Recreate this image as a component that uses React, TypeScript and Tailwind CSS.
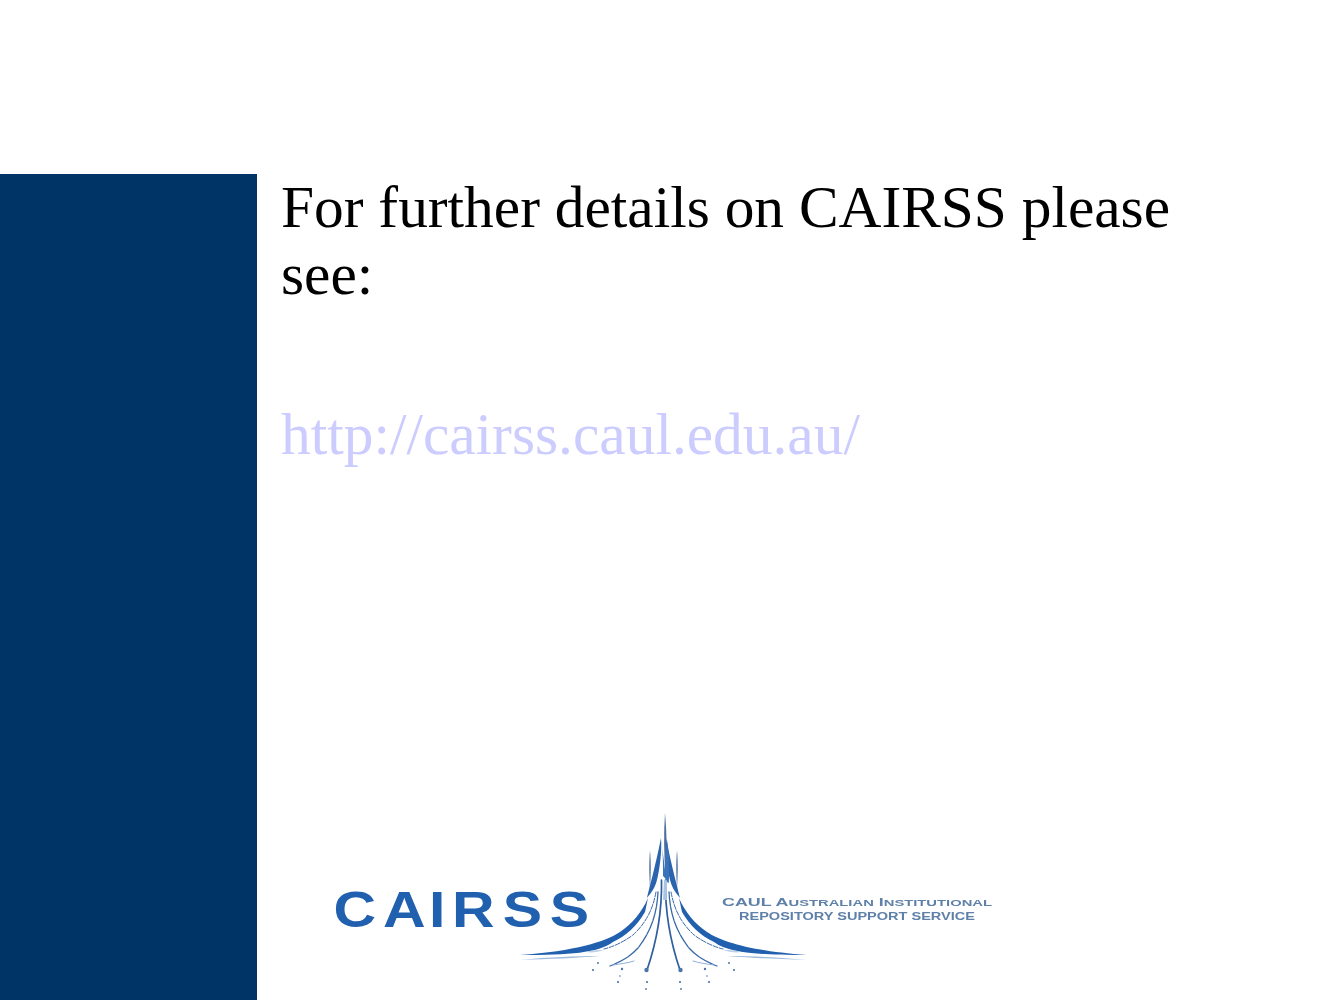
import React from 'react';

// one side of the spire, drawn left of the axis and mirrored for the right
const SpireHalf: React.FC = () => (
  <>
    {/* top shafts */}
    <path d="M661 838 C662 850 660 868 657 880 C655 888 651 893 647 898 C650 885 655 868 661 838 Z" fill="#2a64ae" />
    <path d="M650 850 C651 862 651 872 650 888 C649 872 649 862 650 850 Z" fill="#51729f" />

    {/* outer sweep */}
    <path d="M648 898 C642 912 632 924 620 932 C605 942 575 951 520 955 C570 955 598 953 613 942 C626 936 637 926 645 912 Z" fill="#2160ae" />
    <path d="M520 960 C550 957 575 956 600 956 C575 958 550 959 520 960 Z" fill="#9db9dc" />
    <path d="M586 952 C592 950 598 950 604 950 C598 952 592 953 586 952 Z" fill="#bcd0e8" />

    <g fill="none" stroke="#3a6aa8" strokeLinecap="round">
      {/* dashed second line */}
      <path d="M656 892 C653 908 647 922 633 935 C622 943 612 947 604 949" strokeWidth="1" strokeDasharray="5 1.5" />
      {/* third line */}
      <path d="M658 892 C657 912 652 930 638 948 C630 957 620 962 610 966" strokeWidth="1.3" strokeDasharray="14 1" />
      <path d="M613 965 C620 964 628 963 634 961" strokeWidth="1" stroke="#8fb0d8" />
      {/* fourth line */}
      <path d="M661.5 880 C662 905 659 935 647 970" strokeWidth="1.7" stroke="#2f5f9e" />
    </g>

    {/* falling dots */}
    <g fill="#4a74aa">
      <circle cx="593" cy="970" r="1.1" />
      <circle cx="598" cy="963" r="1" />
      <circle cx="622" cy="969" r="1.2" />
      <circle cx="620" cy="976" r="0.8" />
      <circle cx="618" cy="982" r="1.1" />
      <circle cx="646.5" cy="970" r="2.2" />
      <circle cx="647" cy="982" r="1.1" />
      <circle cx="646" cy="989" r="0.9" />
    </g>
  </>
);

const Logo: React.FC = () => (
  <svg viewBox="320 800 690 200" className="block h-[200px] w-[690px] blur-[0.5px]">
    {/* wordmark */}
    <text x="282.7 324.6 363.5 383 426 465.8" y="927" transform="scale(1.18 1)" fontFamily="Liberation Sans, sans-serif" fontWeight="700" fontSize="50" fill="#2160ae">CAIRSS</text>
    <text x="722" y="905.5" textLength="270" lengthAdjust="spacingAndGlyphs" fontFamily="Liberation Sans, sans-serif" fontWeight="700" fontSize="11.5" fill="#5f80a8">
      CAUL A<tspan fontSize="9.5">USTRALIAN</tspan> I<tspan fontSize="9.5">NSTITUTIONAL</tspan>
    </text>
    <text x="739" y="919.5" textLength="236" lengthAdjust="spacingAndGlyphs" fontFamily="Liberation Sans, sans-serif" fontWeight="700" fontSize="10" fill="#5f80a8">REPOSITORY SUPPORT SERVICE</text>

    <SpireHalf />
    <g transform="matrix(-1 0 0 1 1327 0)">
      <SpireHalf />
    </g>

    {/* axis of the spire */}
    <path d="M665 813 C667 835 667 855 665.5 875 C664 855 663.5 835 665 813 Z" fill="#4d6f9e" />
    <path d="M661 838 C663 850 663 862 663 876 C668 880 669 890 669 876 C669 862 669 850 667 840 L665 870 Z" fill="#3b73bb" />
    <path d="M664 880 L666 880 L667 900 L663 900 Z" fill="#a9c5e6" />
  </svg>
);

const App: React.FC = () => {
  return (
    <div className="h-[1000px] overflow-hidden bg-white pt-[174px] font-['Liberation_Serif',serif]">
      <div className="flex h-[826px]">
        <aside className="w-[257px] shrink-0 bg-[#003366]" />
        <main className="relative flex-1 pl-[24px] pr-[120px]">
          <p className="text-[59.4px] leading-[67px] text-black blur-[0.3px]">For further details on CAIRSS please see:</p>
          <p className="mt-[93px] text-[59.4px] leading-[67px] text-[#ccccff] blur-[0.3px]">http://cairss.caul.edu.au/</p>
          <div className="absolute bottom-0 left-[63px]">
            <Logo />
          </div>
        </main>
      </div>
    </div>
  );
};

export default App;
